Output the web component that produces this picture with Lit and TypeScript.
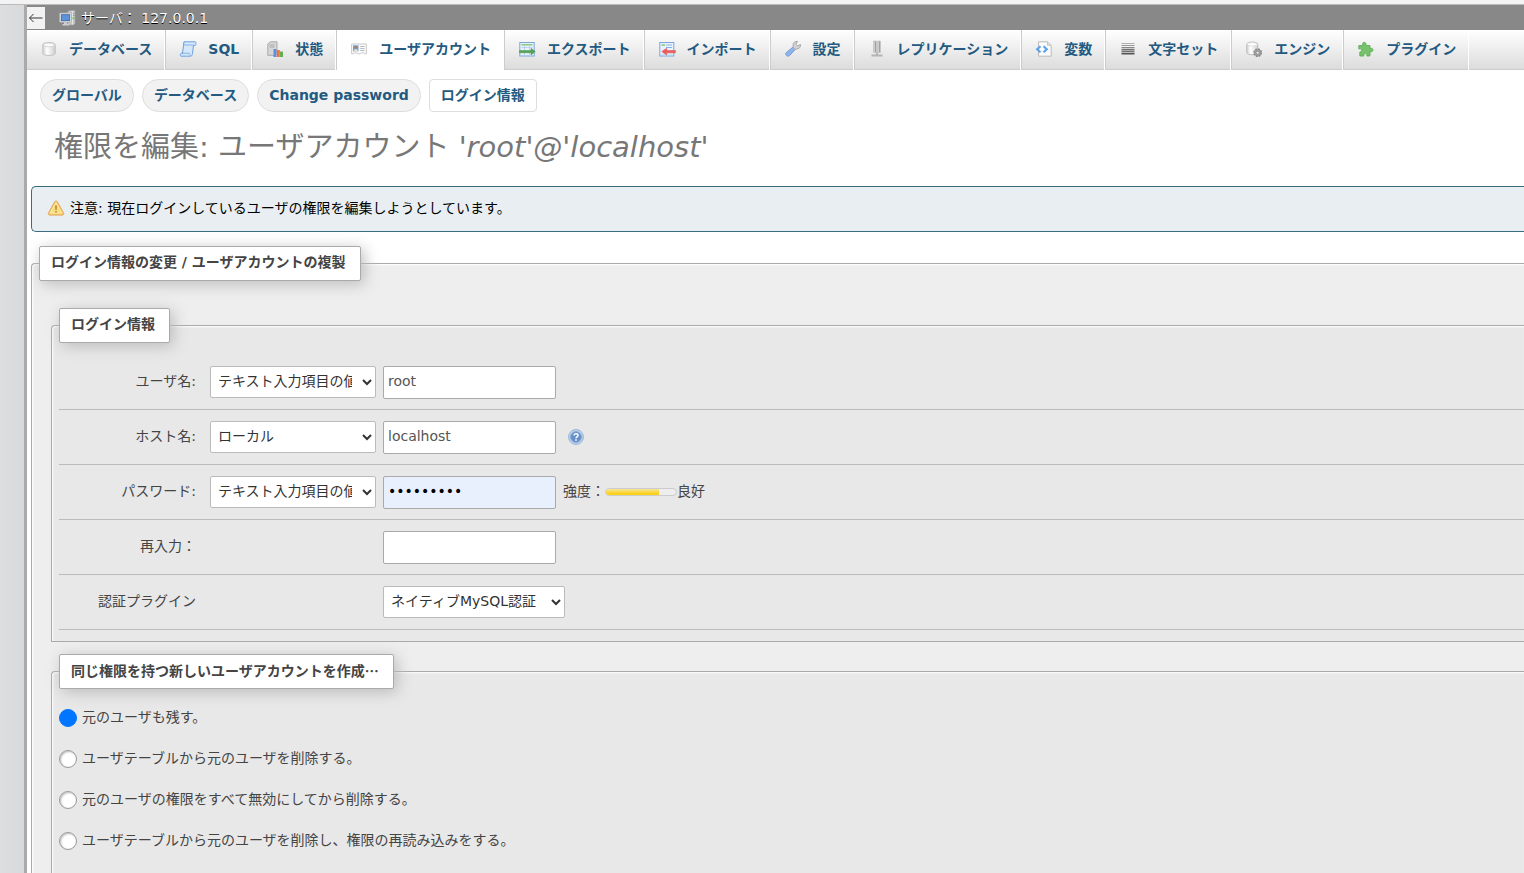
import { LitElement, html, css, svg } from "lit";
import { customElement, property } from "lit/decorators.js";

const icons: Record<string, unknown> = {
  server: svg`<path d="M8 2.500 10.500.5H16v13.200l-2 1.300H9z" fill="#c9c9c9" stroke="#a2a2a2" stroke-width=".7"/><path d="M13.500 1v13.500" stroke="#e2e2e2"/><path d="M14 3.500h1.500M14 5.500h1.500" stroke="#888" stroke-width=".8"/><rect x="13.500" y="7.500" width="2" height="1.600" fill="#5dc843"/><rect x=".5" y="3" width="12" height="9.300" rx=".8" fill="#e2e2e2" stroke="#a8a8a8" stroke-width=".8"/><rect x="2.300" y="4.700" width="8.400" height="6" fill="#5c94d8" stroke="#3466a8" stroke-width=".8"/><path d="M5 12.300h3v1.700h2v1.500H3.500V14H5z" fill="#d0d0d0"/>`,
  database: svg`<path d="M1.800 3.800c0-3 12.400-3 12.400 0v8.400c0 3-12.400 3-12.400 0z" fill="url(#cyl)" stroke="#c0c0c0"/><ellipse cx="8" cy="3.900" rx="5.600" ry="1.900" fill="#fafafa" stroke="#c8c8c8" stroke-width=".7"/>`,
  sql: svg`<path d="M4 .8h11.300c1 0 .9 3.700-.3 3.700h-1.500l-1 8c-.3 2-1 2.700-2 2.700H.8c-.8-.4-.4-2.900.5-2.900h1.200z" fill="#d4e7fb" stroke="#6ba1dc"/><path d="M4 .8c-1 .4-.6 2.500.3 3.200h9.200M1.300 12.300h7.900c.8 0 .4 2.400 1.300 2.700" fill="none" stroke="#7dafe4" stroke-width=".9"/>`,
  status: svg`<path d="M.8 3 3.500.8H10v11l-3 2.500H.8z" fill="#d6d6d6" stroke="#a4a4a4" stroke-width=".9"/><path d="M2.500 4h5M2.500 6h5" stroke="#a0a0a0" stroke-width=".8"/><path d="M6.500 8h3v8h-3z" fill="#5b8fe6"/><path d="M9.800 9h3v7h-3z" fill="#f4703a"/><path d="M13 10.500h3V16h-3z" fill="#61b152"/>`,
  users: svg`<path d="M.6 3h14.800v9.800h-2l-1-1h-2l-1 1h-3l-1-1h-2l-1 1H.6z" fill="#fafafa" stroke="#c4c4c4" stroke-width=".9"/><rect x="2" y="4.300" width="5.500" height="6" fill="#6aa2e0"/><circle cx="4.800" cy="6.300" r="1.400" fill="#b97b4c"/><path d="M2.800 10.300c0-3 4-3 4 0z" fill="#f3dfc0"/><path d="M9.200 5.500h4.300M9.200 7.500h4.300M9.200 9.500h4.300" stroke="#b2b2b2" stroke-width=".9"/>`,
  export: svg`<rect x=".8" y="1.500" width="14.400" height="13.500" fill="#e9f3fd" stroke="#79a7dc"/><path d="M2.500 3.800h11" stroke="#7cc270" stroke-width="1.300"/><path d="M2.500 6.500h11M5.500 5v9M10.500 5v9" stroke="#afcbea" stroke-width=".8"/><path d="M.5 9.500H12V7.200l4.300 3.400L12 14v-2.200H.5z" fill="#53a354" stroke="#418a42" stroke-width=".4"/>`,
  import: svg`<rect x=".8" y="1.500" width="14" height="13.500" fill="#e9f3fd" stroke="#79a7dc"/><path d="M2.500 4h3.500" stroke="#87c178" stroke-width="1.500"/><path d="M7 4h6M7 6.500h6" stroke="#87b2e2" stroke-width="1.200"/><path d="M2.500 13h11" stroke="#afcbea" stroke-width=".8"/><path d="M16.500 9.500H7.700V7.200l-5 3.400 5 3.400v-2.200h8.800z" fill="#ef5956" stroke="#dc4242" stroke-width=".4"/>`,
  settings: svg`<path d="m8 6 2.300 2.300-5.900 6.500c-1.700 1.500-4.700-1.200-3.300-3z" fill="#8db4eb" stroke="#7296d5" stroke-width=".9"/><path d="m8.300 6.500-.2-3C8.200 1.500 10.200.1 12.500.4l-1.600 2.800 1.600 1.600 3.100-1.200c0 3.100-1.900 4.600-4.100 4.400l-1.500.6z" fill="#d2d2d2" stroke="#a2a2a2" stroke-width=".9"/>`,
  replication: svg`<path d="M4.500 0h2.800v11.500H4.500zM8.500 0h2.800v11.500H8.500z" fill="#cdcdcd" stroke="#bbb" stroke-width=".6"/><path d="M6.700.5v10.700M10.700.5v10.700" stroke="#999"/><path d="M7 11.500h2v2h4.500V15.500h-11V13.500H7z" fill="#b4b4b4"/>`,
  variables: svg`<path d="M2.500.8h9l3.700 3.500v10.900H2.500z" fill="#fafafa" stroke="#bbb"/><path d="M11.500.8v3.500h3.700" fill="#ddd" stroke="#bbb" stroke-width=".8"/><path d="M4.500 5.300 1.200 8.300l3.300 3M7.500 5.300l3.300 3-3.300 3" fill="none" stroke="#5ba4ea" stroke-width="2.200"/>`,
  charset: svg`<path d="M1.500 2.500h13" stroke="#b0b0b0"/><path d="M1.500 4.500h13" stroke="#999"/><path d="M1.500 6.500h13" stroke="#888"/><path d="M1.500 8.500h13M1.500 10.500h13" stroke="#707070" stroke-width="1.400"/><path d="M1.500 12.700h13" stroke="#555" stroke-width="1.600"/>`,
  engine: svg`<path d="M.8 3.300c0-3 11-3 11 0v8.200c0 3-11 3-11 0z" fill="url(#cyl)" stroke="#bbb"/><ellipse cx="6.300" cy="3.300" rx="5" ry="1.700" fill="#fff" stroke="#ccc" stroke-width=".6"/><circle cx="11.700" cy="11.700" r="3.700" fill="#a2a2a2" stroke="#858585" stroke-width="1.400" stroke-dasharray="1.700 1.200"/><circle cx="11.700" cy="11.700" r="1.500" fill="#eee" stroke="#777" stroke-width=".6"/>`,
  plugin: svg`<path d="M5 4.500C2.800.3 9.200.3 8 4.500h4v3c4-1.500 4 4.300 0 3.200V15H8.800c1.200-3.300-4-3.300-2.800 0H1.800v-4c3-.5 2.500-4-1-3V4.500z" fill="#76c26d" stroke="#5aaa53" stroke-width=".8"/>`,
  warning: svg`<path d="M8 .9c.6 0 1.100.5 1.400 1l6.100 11c.6 1.100 0 2.200-1.100 2.200H1.600c-1.100 0-1.700-1.100-1.100-2.200l6.100-11c.3-.5.8-1 1.400-1z" fill="#f6cd68" stroke="#e3a85a"/><path d="M8 2.700 13.700 13H2.300z" fill="#f9dd7b" stroke="#fff0bd" stroke-width=".8"/><path d="M7 5.500h2L8.600 10H7.400zM7.200 11h1.600v1.500H7.200z" fill="#b98a31"/>`,
  help: svg`<circle cx="8" cy="8" r="7.500" fill="#b9cfea" stroke="#9db9dc"/><circle cx="8" cy="8" r="5.300" fill="#6690c6" stroke="#7da2d2"/><path d="M6 6.500C6 4.200 10 4.400 10 6.400 10 7.900 8 7.900 8 9.300" fill="none" stroke="#fff" stroke-width="1.500"/><path d="M7.200 10.300h1.600v1.500H7.200z" fill="#fff"/>`,
};

@customElement("pma-icon")
export class PmaIcon extends LitElement {
  @property() name = "";
  static styles = css`
    :host { display: inline-block; width: 16px; height: 16px; flex: none; }
    svg { display: block; overflow: visible; }
  `;
  render() {
    return html`<svg width="16" height="16" viewBox="0 0 16 16" aria-hidden="true">
      <defs><linearGradient id="cyl"><stop stop-color="#d2d2d2"/><stop offset=".35" stop-color="#fff"/><stop offset="1" stop-color="#cecece"/></linearGradient></defs>
      ${icons[this.name]}
    </svg>`;
  }
}

const tabs = [
  ["database", "データベース"],
  ["sql", "SQL"],
  ["status", "状態"],
  ["users", "ユーザアカウント"],
  ["export", "エクスポート"],
  ["import", "インポート"],
  ["settings", "設定"],
  ["replication", "レプリケーション"],
  ["variables", "変数"],
  ["charset", "文字セット"],
  ["engine", "エンジン"],
  ["plugin", "プラグイン"],
];
const pages = ["グローバル", "データベース", "Change password", "ログイン情報"];
const modes = [
  "元のユーザも残す。",
  "ユーザテーブルから元のユーザを削除する。",
  "元のユーザの権限をすべて無効にしてから削除する。",
  "ユーザテーブルから元のユーザを削除し、権限の再読み込みをする。",
];

@customElement("app-root")
export class AppRoot extends LitElement {
  static styles = css`
    :host {
      display: block;
      min-height: 100vh;
      overflow: hidden;
      color: #444;
      background: #fff;
      font: 14px/20px "DejaVu Sans", "Noto Sans CJK JP", sans-serif;
    }
    * { box-sizing: border-box; }
    .strip { height: 5px; background: #f3f3f3; border-bottom: 1px solid #bbb; }
    .frame { display: grid; grid-template-columns: 24px 3px minmax(0, 1fr); height: calc(100vh - 5px); overflow: hidden; }
    .side { background: linear-gradient(90deg, #dcdee0, #d8d9db); }
    .divider { background: #aaa; }
    .server { display: flex; align-items: center; height: 25px; background: #888; color: #fff; text-shadow: 0 1px 0 #000; }
    .back { width: 18px; height: 22px; padding: 0; border: 0; background: #f2f2f2; }
    .back svg { display: block; margin: auto; }
    .host { display: flex; align-items: center; gap: 6px; margin-left: 14px; color: inherit; text-decoration: none; }
    .tabs { display: flex; height: 40px; background: linear-gradient(#fff, #dcdcdc); border-bottom: 1px solid #ccc; white-space: nowrap; }
    .tab { display: flex; align-items: center; gap: 12px; height: 40px; padding: 0 12px 2px 14px; border-right: 1px solid #fff; border-left: 1px solid #ccc; color: #235a81; font-weight: bold; text-decoration: none; }
    .tab:first-child { border-left: 0; }
    .tab.on { background: #fff; }
    .pages { display: flex; gap: 8px; padding: 9px 13px 0; }
    .page { height: 33px; padding: 5px 11px; border: 1px solid #ddd; border-radius: 17px; background: #f2f2f2; color: #235a81; font-weight: bold; text-decoration: none; white-space: nowrap; }
    .page.on { border-radius: 4px; background: #fff; }
    h1 { margin: 15px 0 19px 27px; color: #777; font-size: 29px; line-height: 40px; font-weight: normal; white-space: nowrap; }
    .notice { display: flex; align-items: center; gap: 6px; height: 46px; margin-left: 4px; padding: 0 16px 2px; border: 1px solid #3a6c7e; border-right: 0; border-radius: 5px 0 0 5px; background: #e8eef1; color: #000; }
    fieldset { margin: 0; min-width: 0; border: 1px solid #aaa; border-right: 0; border-radius: 4px 0 0 0; background: #eee; box-shadow: 1px 1px 2px #fff inset; }
    legend { height: 35px; padding: 5px 14px 5px 11px; border: 1px solid #aaa; border-radius: 2px; background: #fff; font-weight: bold; box-shadow: 3px 3px 15px #bbb; }
    .cjk { font-family: "Noto Sans CJK JP", sans-serif; }
    .outer { margin: 14px 0 0 4px; padding: 27px 0 300px 19px; }
    .outer > legend { margin-left: -12px; }
    .inner { padding: 0 0 11px 7px; background: #e8e8e8; }
    .inner + .inner { margin-top: 12px; padding-bottom: 200px; }
    .row { display: grid; grid-template-columns: 144px 166px 1fr; column-gap: 7px; align-items: center; height: 55px; border-bottom: 1px solid #bbb; }
    .row > :first-child { justify-self: end; }
    .rows { padding-top: 12px; }
    .label { white-space: nowrap; padding-bottom: 2px; }
    .row > .label { margin-right: 7px; }
    select, input { font: inherit; }
    select { width: 166px; height: 32px; padding: 2px 7px 4px 3px; border: 1px solid #bbb; border-radius: 2px; background: #fff; color: #333; }
    .auto { width: 182px; }
    .text { width: 173px; height: 33px; padding: 4px 5px 6px 4px; border: 1px solid #aaa; border-radius: 2px; background: #fff; color: #555; }
    .filled { background: #e8f0fe; color: #000; }
    .field { display: flex; align-items: center; }
    .help { margin-left: 12px; height: 16px; }
    .strength { margin-left: 7px; }
    .meter { width: 72px; height: 8px; border: 1px solid #ccc; border-radius: 4px; background: #eee; overflow: hidden; }
    .fill { height: 6px; background: linear-gradient(#f5e6a0, #fcd116 80%); }
    .mode { display: flex; align-items: center; gap: 5px; height: 21px; margin-bottom: 20px; }
    .modes { padding-top: 18px; }
    .radio { appearance: none; width: 18px; height: 18px; margin: 0; border: 1px solid #999; border-radius: 50%; background: #fff; box-shadow: inset 1px 1px 2px #bbb; }
    .radio:checked { border-color: #0075ff; background: #0075ff; box-shadow: none; }
  `;

  render() {
    return html`
      <div class="strip"></div>
      <div class="frame">
        <aside class="side"></aside>
        <div class="divider"></div>
        <main>
          <div class="server">
            <button class="back" aria-label="戻る"><svg width="16" height="10" viewBox="0 0 16 10"><path d="M5.500 1 1.500 5l4 4M1.500 5h13" fill="none" stroke="#333"/></svg></button>
            <a class="host" href="#"><pma-icon name="server"></pma-icon><span>サーバ： 127.0.0.1</span></a>
          </div>
          <nav class="tabs">
            ${tabs.map(([icon, text]) => html`<a class="tab ${icon === "users" ? "on" : ""}" href="#"><pma-icon name=${icon}></pma-icon><span>${text}</span></a>`)}
          </nav>
          <nav class="pages">
            ${pages.map((text, i) => html`<a class="page ${i === 3 ? "on" : ""}" href="#">${text}</a>`)}
          </nav>
          <h1>権限を編集: ユーザアカウント <i>'root'@'localhost'</i></h1>
          <div class="notice"><pma-icon name="warning"></pma-icon><span>注意: 現在ログインしているユーザの権限を編集しようとしています。</span></div>
          <fieldset class="outer">
            <legend>ログイン情報の変更 / ユーザアカウントの複製</legend>
            <fieldset class="inner">
              <legend>ログイン情報</legend>
              <div class="rows">
                <div class="row">
                  <label class="label" for="user">ユーザ名:</label>
                  <select aria-label="ユーザ名"><option>テキスト入力項目の値を利用する</option></select>
                  <div class="field"><input class="text" id="user" value="root"></div>
                </div>
                <div class="row">
                  <label class="label" for="hostname">ホスト名:</label>
                  <select aria-label="ホスト名"><option>ローカル</option></select>
                  <div class="field"><input class="text" id="hostname" value="localhost"><a class="help" href="#" aria-label="ヘルプ"><pma-icon name="help"></pma-icon></a></div>
                </div>
                <div class="row">
                  <label class="label" for="password">パスワード:</label>
                  <select aria-label="パスワード"><option>テキスト入力項目の値を利用する</option></select>
                  <div class="field">
                    <input class="text filled" id="password" type="password" value="password1">
                    <span class="label strength">強度：</span>
                    <div class="meter"><div class="fill" style="width:75%"></div></div>
                    <span class="label">良好</span>
                  </div>
                </div>
                <div class="row">
                  <label class="label" for="retype">再入力：</label><span></span>
                  <div class="field"><input class="text" id="retype" type="password"></div>
                </div>
                <div class="row">
                  <label class="label" for="plugin">認証プラグイン</label><span></span>
                  <div class="field"><select class="auto" id="plugin"><option>ネイティブMySQL認証</option></select></div>
                </div>
              </div>
            </fieldset>
            <fieldset class="inner">
              <legend class="cjk" lang="ja">同じ権限を持つ新しいユーザアカウントを作成…</legend>
              <div class="modes">
                ${modes.map((text, i) => html`<div class="mode"><input class="radio" type="radio" name="mode" id="mode${i}" ?checked=${i === 0}><label class="label" for="mode${i}">${text}</label></div>`)}
              </div>
            </fieldset>
          </fieldset>
        </main>
      </div>
    `;
  }
}
